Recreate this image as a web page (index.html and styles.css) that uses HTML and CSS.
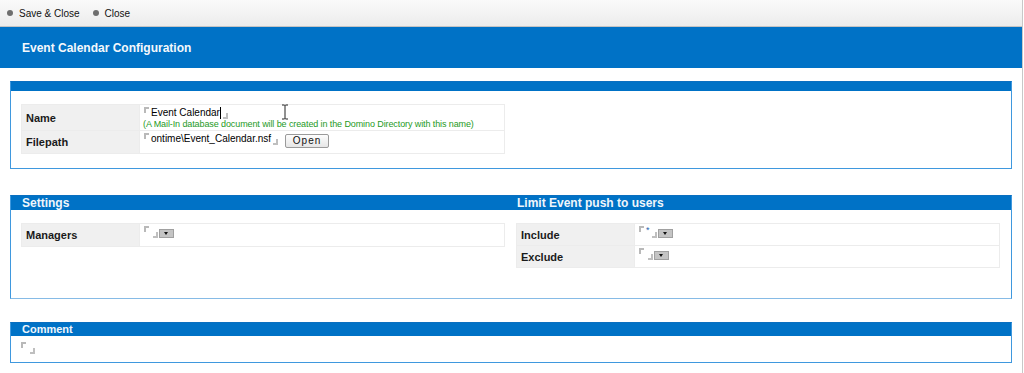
FILE: index.html
```html
<!DOCTYPE html>
<html>
<head>
<meta charset="utf-8">
<link rel="stylesheet" href="styles.css">
</head>
<body>
<div class="page">
  <div class="toolbar">
    <span class="tb-item"><span class="dot"></span>Save &amp; Close</span>
    <span class="tb-item"><span class="dot"></span>Close</span>
  </div>
  <div class="title-bar">Event Calendar Configuration</div>
  <div class="main">
    <section class="box box-first">
      <div class="box-head thin"></div>
      <div class="box-body pad1">
        <table class="form">
          <tr class="row-name">
            <td class="lbl">Name</td>
            <td class="val">
              <div class="line"><span class="fs"></span>Event Calendar<span class="caret"></span><span class="fe"></span></div>
              <div class="hint">(A Mail-In database document will be created in the Domino Directory with this name)</div>
            </td>
          </tr>
          <tr class="row-std">
            <td class="lbl">Filepath</td>
            <td class="val"><div class="line"><span class="fs"></span>ontime\Event_Calendar.nsf<span class="fe"></span><button class="btn">Open</button></div></td>
          </tr>
        </table>
        <svg class="ibeam" width="8" height="16" viewBox="0 0 8 16"><path d="M1 1h2.5L4 1.6 4.5 1H7M4 1.6V14.4M1 15h2.5L4 14.4 4.5 15H7" fill="none" stroke="#222" stroke-width="1"/></svg>
      </div>
    </section>

    <section class="box box-second">
      <div class="box-head cols">
        <div class="col">Settings</div>
        <div class="col">Limit Event push to users</div>
      </div>
      <div class="box-body cols pad2">
        <div class="col">
          <table class="form">
            <tr class="row-mgr">
              <td class="lbl">Managers</td>
              <td class="val"><div class="line"><span class="fs"></span><span class="fe"></span><span class="dd"></span></div></td>
            </tr>
          </table>
        </div>
        <div class="col">
          <table class="form">
            <tr class="row-sm">
              <td class="lbl">Include</td>
              <td class="val"><div class="line"><span class="fs"></span><span class="star">*</span><span class="fe"></span><span class="dd"></span></div></td>
            </tr>
            <tr class="row-sm">
              <td class="lbl">Exclude</td>
              <td class="val"><div class="line"><span class="fs"></span><span class="fe"></span><span class="dd"></span></div></td>
            </tr>
          </table>
        </div>
      </div>
    </section>

    <section class="box box-third">
      <div class="box-head small">Comment</div>
      <div class="box-body pad3"><div class="line"><span class="fs"></span><span class="fe"></span></div></div>
    </section>
  </div>
</div>
</body>
</html>
```

FILE: styles.css
```css
html, body {
  margin: 0;
  padding: 0;
  background: #fff;
}
body {
  font-family: "Liberation Sans", Arial, sans-serif;
  color: #000;
  height: 373px;
  overflow: hidden;
}
.page {
  width: 1022px;
  border-right: 1px solid #c8c8c8;
  min-height: 373px;
}
.toolbar {
  height: 26px;
  border-bottom: 1px solid #c4c4c4;
  background: linear-gradient(#fafafa, #ececec);
  display: flex;
  align-items: center;
  gap: 13px;
  padding-left: 7px;
  font-size: 10px;
  color: #111;
}
.tb-item {
  display: flex;
  align-items: center;
}
.dot {
  width: 6px;
  height: 6px;
  border-radius: 50%;
  background: #6e6e6e;
  margin-right: 6px;
}
.title-bar {
  height: 41px;
  background: #0072c6;
  color: #f4f8fc;
  font-weight: bold;
  font-size: 12px;
  display: flex;
  align-items: center;
  padding-left: 22px;
  box-sizing: border-box;
}
.main {
  padding: 13px 10px 0 10px;
}
.box {
  border: 1px solid #3f98de;
  border-top: 1px solid #0a6fc0;
  width: 1000px;
}
.box-second {
  margin-top: 26px;
  border-bottom-color: #86bbe6;
}
.box-third {
  margin-top: 23px;
}
.box-head {
  background: #0072c6;
  color: #f0f6fb;
  font-weight: bold;
  font-size: 12px;
  height: 14px;
  line-height: 14px;
}
.box-head.thin {
  height: 9px;
}
.box-head.small {
  font-size: 11px;
  height: 13px;
  line-height: 13px;
  padding-left: 11px;
}
.cols {
  display: flex;
  gap: 11px;
  padding-left: 10px;
}
.cols .col {
  width: 484px;
}
.box-head.cols .col {
  padding-left: 1px;
  box-sizing: border-box;
}
.box-body {
  position: relative;
}
.pad1 {
  padding: 13px 10px 14px 10px;
}
.pad2 {
  padding-top: 13px;
  padding-bottom: 30px;
  align-items: flex-start;
}
.pad3 {
  padding: 6px 10px 11px 10px;
  height: 9px;
}
.form {
  border-collapse: collapse;
  width: 484px;
  font-size: 11px;
}
.form td {
  padding: 0;
  border: 1px solid #ececec;
  vertical-align: middle;
}
.form .lbl {
  width: 113px;
  background: #f0f0f0;
  font-weight: bold;
  padding-left: 4px;
  color: #1a1a1a;
}
.form .val {
  padding-left: 4px;
  vertical-align: top;
  padding-top: 2px;
}
.row-name td { height: 23px; }
.row-std td { height: 20px; }
.row-mgr td { height: 20px; }
.row-sm td { height: 19px; }
.line {
  display: flex;
  align-items: flex-start;
  font-size: 10px;
  line-height: 12px;
  color: #000;
}
.fs {
  width: 3px;
  height: 4px;
  border-left: 2px solid #a8a8a8;
  border-top: 2px solid #a8a8a8;
  margin-right: 2px;
  opacity: 0.8;
}
.fe {
  width: 3px;
  height: 4px;
  border-right: 2px solid #b0b0b0;
  border-bottom: 2px solid #b0b0b0;
  margin-top: 6px;
  margin-left: 2px;
  opacity: 0.8;
}
.caret {
  width: 1px;
  height: 12px;
  background: #000;
}
.hint {
  color: #1e9a1e;
  font-size: 9px;
  line-height: 10px;
  letter-spacing: -0.1px;
  margin-left: -1px;
}
.btn {
  margin-left: 7px;
  width: 44px;
  height: 14px;
  font-family: "Liberation Sans", Arial, sans-serif;
  font-size: 10px;
  letter-spacing: 1px;
  line-height: 12px;
  padding: 0;
  border: 1px solid #9a9a9a;
  border-radius: 2px;
  background: linear-gradient(#fdfdfd, #e6e6e6);
  color: #111;
  margin-top: 1px;
}
.dd {
  width: 13px;
  height: 7px;
  background: #c4c4c4;
  border: 1px solid #a0a0a0;
  margin-top: 3px;
  margin-left: 1px;
  position: relative;
}
.dd::after {
  content: "";
  position: absolute;
  left: 4px;
  top: 2px;
  border-left: 2.5px solid transparent;
  border-right: 2.5px solid transparent;
  border-top: 3px solid #111;
}
.star {
  font-size: 9px;
  color: #2a5fb0;
  line-height: 9px;
}
.ibeam {
  position: absolute;
  left: 270px;
  top: 13px;
}
```
